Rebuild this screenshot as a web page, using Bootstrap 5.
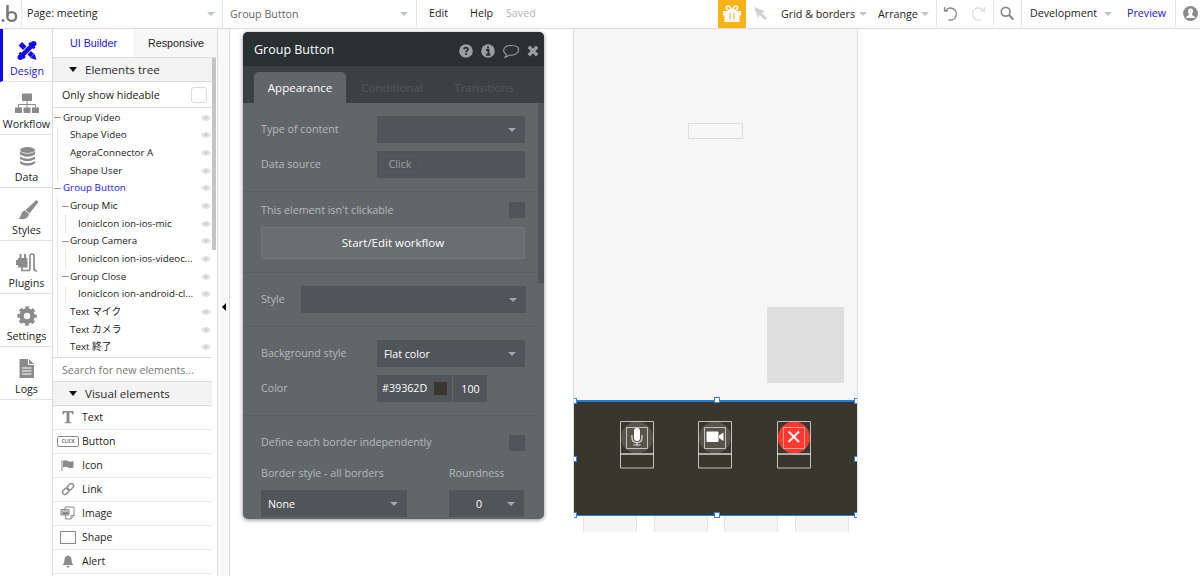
<!DOCTYPE html>
<html lang="en">
<head>
<meta charset="utf-8">
<title>Page: meeting</title>
<meta name="viewport" content="width=device-width, initial-scale=1">
<link href="https://cdn.jsdelivr.net/npm/bootstrap@5.3.0/dist/css/bootstrap.min.css" rel="stylesheet">
<style>
:root{--line:#e3e3e3;--ico:#8b8b8b;--blue:#1a12e8}
body{font-family:"Open Sans","Noto Sans CJK JP",sans-serif;font-size:10.7px;line-height:16px;color:#222;height:576px;overflow:hidden;background:#fff}
svg{display:block;flex:none}
.topbar{height:29px;border-bottom:1px solid #dcdcdc;padding-bottom:1px}
.topbar>*{flex:none;height:27px}
.sep{border-right:1px solid #e6e6e6}
.caret{width:0;height:0;border:4px solid transparent;border-top-color:#bcc5cb;border-bottom:0;flex:none;margin-top:1px}
.w-logo{width:22px}.w-page{width:201px;padding:0 7px 0 5px}.w-elem{width:194px;padding:0 8px 0 7px;color:#666}
.menu-edit{width:53px;padding-left:12px}.menu-help{width:36px}
.gift{width:28px;height:28px!important;background:#fbb216}
.rail{width:53px;border-right:1px solid #d9d9d9}
.rail-item{height:53px;border-bottom:1px solid #e3e3e3;font-size:10.7px;padding:10px 0 0 1px;color:#222}
.rail-item svg{height:24px;width:24px}
.rail-item.sel{color:var(--blue);border-left:3px solid #1508f0;padding-right:2px}
.side{width:165px;border-right:1px solid #dedede}
.side-body{width:159px}
.tabs-row{height:29px;font:10.7px "Liberation Sans",Arial,sans-serif;line-height:28px;border-bottom:1px solid #ddd}
.tab-ui{width:81px;color:var(--blue)}
.tab-resp{background:#f7f7f7;border-left:1px solid #efefef}
.sect{height:24px;background:#f3f3f3;border-bottom:1px solid #dcdcdc;font-size:11.6px;padding-left:15px;color:#2b2b2b}
.sect .caret{border-top-color:#111;margin:0 8px 0 1px;border-width:5px 4px 0}
.hideable{height:26px;border-bottom:1px solid #e2e2e2;padding:0 5px 0 9px}
.cb{width:16px;height:16px;border:1px solid #dadada;border-radius:3px}
.tree{height:250px;font-size:9.8px;border-bottom:1px solid #dcdcdc;padding-top:1px}
.tree-row{height:17.66px;padding-right:1px}
.tree-row svg{margin-left:auto}
.l0{padding-left:1px}.l1{padding-left:17px}.l1g{padding-left:9px}.l2{padding-left:25px}
.l0::before,.l1g::before{content:"";width:7px;height:1px;background:#9b9b9b;margin-right:2px;flex:none}
.l1g::before{margin-right:1px}
.l1,.l1g{background:linear-gradient(#e6e6e6,#e6e6e6) 4px 0/1px 100% no-repeat}
.l2{background:linear-gradient(#e6e6e6,#e6e6e6) 4px 0/1px 100% no-repeat,linear-gradient(#e6e6e6,#e6e6e6) 12px 0/1px 100% no-repeat}
.find{height:24px;border-bottom:1px solid #dcdcdc;padding-left:9px;color:#777}
.pal{height:24px;border-bottom:1px solid #e9e9e9;font-size:10.5px;padding-bottom:1px}
.pal span{width:29px}
.thumb{width:4px;height:192px;background:#c4c4c4;margin-top:29px}
.fold{width:12px;background:#f8f8f8;border-right:1px solid #dadada}
.stage{height:547px;overflow:hidden}
.device{left:343px;top:0;width:285px;height:486px;background:#f6f6f6;border:solid #dedede;border-width:0 1px}
.white-box{border:1px solid #dcdcdc;left:458px;top:94px;width:55px;height:16px}
.user-box{background:#dedede;left:537px;top:278px;width:77px;height:76px}
.group{left:344px;top:371px;width:283px;height:116px;background:#39362d;border:solid #1b7fdc;border-width:2px 0 1px}
.hd{width:6px;height:6px;background:#fff;border:1px solid #3c7de8}
.hd.edge{width:3px}.hd.el{border-left:0}.hd.er{border-right:0}
.tool{width:34px;top:19px}
.foot{left:353px;top:487px;width:266px;height:16px}
.foot div{width:54px;background:#f5f5f5;border:solid #e4e4e4;border-width:0 1px}
.dlg{left:13px;top:3px;width:301px;height:487px;border-radius:5px;background:#616669;color:#b5babc;box-shadow:0 1px 4px rgba(0,0,0,.45);overflow:hidden}
.dlg-head{height:34px;background:#283031;color:#fff;font-size:12.5px;padding:1px 5px 0 11px}
.dlg-tabs{height:37px;background:#3b4042;padding:6px 0 0 11px;font-size:11.5px;color:#55595b}
.dlg-tabs div{width:92px;height:31px}
.dlg-tabs .on{background:#616669;color:#fff;font-weight:500;border-radius:5px 5px 0 0}
.dlg-main{width:295px}
.blk{border-bottom:1px solid #595e61;padding:0 13px 0 18px}
.lb{margin-top:-2px}
.f{background:#50555a;height:27px;color:#fff;padding:0 9px 0 7px;font-weight:500}
.f .caret{border-top-color:#a3a8aa}
.f.wide{width:148px}
.chk{width:16px;height:16px;background:#50555a}
.click{border:1px dashed #5b6064;border-radius:3px;color:#9ea3a5;width:40px;height:17px;margin:-1px 0 0 -4px;font-weight:400}
.wf{height:32px;background:#696e71;border:1px solid #74797b;border-radius:2px;color:#fff;font-size:11.5px;font-weight:500}
.dthumb{width:6px;height:180px;background:#50555a}
</style>
</head>
<body>
<svg width="0" height="0" class="position-absolute"><defs>
<symbol id="eye" viewBox="0 0 10 8"><path d="M0 4Q5-2.500 10 4Q5 10.500 0 4Z" fill="#e0e0e0"/><circle cx="5" cy="3.800" r="2.200" fill="#cfcfcf" stroke="#f4f4f4" stroke-width=".6"/></symbol>
</defs></svg>

<header class="topbar d-flex align-items-center">
  <div class="w-logo sep d-flex align-items-center"><svg width="20" height="24" viewBox="0 0 20 24"><circle cx="3" cy="18.500" r="1.500" fill="#777"/><path d="M7.500 3V14" stroke="#777" stroke-width="2.500" fill="none"/><circle cx="11.700" cy="14.500" r="4.400" fill="none" stroke="#777" stroke-width="2.400"/></svg></div>
  <div class="w-page sep d-flex align-items-center justify-content-between"><span class="lb">Page: meeting</span><i class="caret"></i></div>
  <div class="w-elem sep d-flex align-items-center justify-content-between"><span>Group Button</span><i class="caret"></i></div>
  <div class="menu-edit d-flex align-items-center"><span class="lb">Edit</span></div>
  <div class="menu-help d-flex align-items-center"><span class="lb">Help</span></div>
  <div class="d-flex align-items-center" style="color:#b5b5b5"><span class="lb">Saved</span></div>
  <div class="gift ms-auto d-flex justify-content-center align-items-center"><svg width="20" height="18" viewBox="0 0 20 18"><path d="M1 6H19V10.500H1ZM2.500 10H17.500V17H2.500Z" fill="#fff"/><path d="M9.500 5.500C3 5.500 3.500 1 6 1S9 3.500 9.500 5.500ZM10.500 5.500C17 5.500 16.500 1 14 1S11 3.500 10.500 5.500Z" fill="none" stroke="#fff" stroke-width="1.700"/><path d="M8 7.500V15.500M12 7.500V15.500" stroke="#fbb216" stroke-width="1"/></svg></div>
  <div class="d-flex align-items-center ps-2" style="width:35px"><svg width="14" height="14" viewBox="0 0 14 14"><path d="M0 0L11 4L7.800 6L13 11L10.800 13L5.800 8L4 11Z" fill="#d2d2d2"/></svg></div>
  <div class="d-flex align-items-center" style="width:97px">Grid &amp; borders<i class="caret ms-auto" style="margin-right:11px"></i></div>
  <div class="d-flex align-items-center sep" style="width:59px">Arrange<i class="caret ms-auto" style="margin-right:7px"></i></div>
  <div class="d-flex align-items-center sep" style="width:57px;padding-left:6px;gap:13px"><svg width="15" height="16" viewBox="0 0 15 16"><path d="M2.500 4.500A6 6 0 1 1 5.500 13.800" fill="none" stroke="#8a8a8a" stroke-width="1.500"/><path d="M1.500 1V5H5" fill="none" stroke="#8a8a8a" stroke-width="1.300"/></svg><svg width="15" height="16" viewBox="0 0 15 16"><path d="M12.500 4.500A6 6 0 1 0 9.500 13.800" fill="none" stroke="#dedede" stroke-width="1.500"/><path d="M13.500 1V5H10" fill="none" stroke="#dedede" stroke-width="1.300"/></svg></div>
  <div class="d-flex align-items-center justify-content-center sep" style="width:28px"><svg width="15" height="15" viewBox="0 0 15 15"><circle cx="5.700" cy="5.700" r="4.400" fill="none" stroke="#8a8a8a" stroke-width="1.700"/><path d="M9 9L13.500 13.500" stroke="#8a8a8a" stroke-width="2.200"/></svg></div>
  <div class="d-flex align-items-center" style="width:105px;padding-left:8px"><span class="lb">Development</span><i class="caret" style="margin-left:7px"></i></div>
  <div class="d-flex align-items-center sep" style="width:49px;color:var(--blue)"><span class="lb">Preview</span></div>
  <div class="d-flex align-items-center justify-content-end" style="width:24px;padding-right:2px"><svg width="15" height="15" viewBox="0 0 15 15"><circle cx="7.500" cy="7.500" r="7.400" fill="#8a8a8a"/><path d="M7.500 2.500C9.500 2.500 10.300 4 10 5.500S9 8 9 8.700S12 10 12 12H3C3 10 6 9.400 6 8.700S5.200 7 5 5.500S5.500 2.500 7.500 2.500Z" fill="#fff"/></svg></div>
</header>

<div class="d-flex" style="height:547px">
  <nav class="rail flex-shrink-0">
    <div class="rail-item sel d-flex flex-column align-items-center"><svg viewBox="0 0 24 24" style="margin-top:-1px;margin-bottom:1px"><g transform="translate(12 12.500) scale(.95) translate(-12 -12)"><path d="M5 5L17.500 17.500" stroke="#1508f0" stroke-width="5.200"/><path d="M15.500 20L20 15.500L22 22Z" fill="#1508f0"/><path d="M18.500 5.500L5.500 18.500" stroke="#fff" stroke-width="6.600"/><path d="M18 6L6 18" stroke="#1508f0" stroke-width="4.800"/><path d="M14.300 4L20 9.700M4 14.300L9.700 20" stroke="#1508f0" stroke-width="3"/><circle cx="19" cy="5" r="2.900" fill="#1508f0"/><circle cx="5" cy="19" r="2.900" fill="#1508f0"/></g></svg>Design</div>
    <div class="rail-item d-flex flex-column align-items-center"><svg viewBox="0 0 24 24" fill="#8b8b8b"><path d="M7 1.500H17V9H7ZM0 15.500H7V21H0ZM8.500 15.500H15.500V21H8.500ZM17 15.500H24V21H17Z"/><path d="M12 9V16M3.500 16V12.500H20.500V16" stroke="#8b8b8b" fill="none"/></svg>Workflow</div>
    <div class="rail-item d-flex flex-column align-items-center"><svg viewBox="0 0 24 24" fill="#8b8b8b"><ellipse cx="12.500" cy="5" rx="7.500" ry="3"/><path d="M5 6.500Q12.500 11 20 6.500V9.500Q12.500 14 5 9.500ZM5 11.500Q12.500 16 20 11.500V14Q12.500 18.500 5 14ZM5 16Q12.500 20.500 20 16V18.500Q12.500 23 5 18.500Z"/></svg>Data</div>
    <div class="rail-item d-flex flex-column align-items-center"><svg viewBox="0 0 24 24" fill="#8b8b8b"><path d="M21.500 2L23.500 4L14.500 15.500L10.500 12Z"/><path d="M10 12.500L14 16C13 20.500 8 22.500 3.500 20.500C6.500 19 5.500 13 10 12.500Z"/></svg>Styles</div>
    <div class="rail-item d-flex flex-column align-items-center"><svg viewBox="0 0 24 24" fill="#8b8b8b"><path d="M3 7H12.500V16.500H3ZM4.500 3H6.500V8H4.500ZM9 3H11V8H9ZM1 9H4V14H1Z"/><path d="M8 15V19.500H14.500Q16 19.500 16 17V5Q16 3 18 3T20 5V17Q20 20 23 20" fill="none" stroke="#8b8b8b" stroke-width="1.700" transform="translate(-1 0)"/></svg>Plugins</div>
    <div class="rail-item d-flex flex-column align-items-center"><svg viewBox="0 0 24 24"><circle cx="12" cy="12" r="5.500" fill="none" stroke="#8b8b8b" stroke-width="4.600"/><circle cx="12" cy="12" r="8.300" fill="none" stroke="#8b8b8b" stroke-width="2.800" stroke-dasharray="3.600 2.919" stroke-dashoffset="1.800"/></svg>Settings</div>
    <div class="rail-item d-flex flex-column align-items-center"><svg viewBox="0 0 24 24"><path d="M4.500 2H14L19 7V21H4.500Z" fill="#8b8b8b"/><path d="M13.500 2V7.500H19M7 11H16.500M7 14H16.500M7 17H16.500" stroke="#fff" fill="none"/></svg>Logs</div>
  </nav>

  <aside class="side flex-shrink-0 d-flex">
    <div class="side-body flex-shrink-0">
      <div class="tabs-row d-flex text-center" style="width:164px"><div class="tab-ui">UI Builder</div><div class="tab-resp flex-fill">Responsive</div></div>
      <div class="sect d-flex align-items-center"><i class="caret"></i>Elements tree</div>
      <div class="hideable d-flex align-items-center justify-content-between">Only show hideable<i class="cb"></i></div>
      <div class="tree">
        <div class="tree-row l0 d-flex align-items-center">Group Video<svg width="10" height="8"><use href="#eye"/></svg></div>
        <div class="tree-row l1 d-flex align-items-center">Shape Video<svg width="10" height="8"><use href="#eye"/></svg></div>
        <div class="tree-row l1 d-flex align-items-center">AgoraConnector A<svg width="10" height="8"><use href="#eye"/></svg></div>
        <div class="tree-row l1 d-flex align-items-center">Shape User<svg width="10" height="8"><use href="#eye"/></svg></div>
        <div class="tree-row l0 d-flex align-items-center" style="color:var(--blue)">Group Button<svg width="10" height="8"><use href="#eye"/></svg></div>
        <div class="tree-row l1g d-flex align-items-center">Group Mic<svg width="10" height="8"><use href="#eye"/></svg></div>
        <div class="tree-row l2 d-flex align-items-center">IonicIcon ion-ios-mic<svg width="10" height="8"><use href="#eye"/></svg></div>
        <div class="tree-row l1g d-flex align-items-center">Group Camera<svg width="10" height="8"><use href="#eye"/></svg></div>
        <div class="tree-row l2 d-flex align-items-center">IonicIcon ion-ios-videoc...<svg width="10" height="8"><use href="#eye"/></svg></div>
        <div class="tree-row l1g d-flex align-items-center">Group Close<svg width="10" height="8"><use href="#eye"/></svg></div>
        <div class="tree-row l2 d-flex align-items-center">IonicIcon ion-android-cl...<svg width="10" height="8"><use href="#eye"/></svg></div>
        <div class="tree-row l1 d-flex align-items-center">Text マイク<svg width="10" height="8"><use href="#eye"/></svg></div>
        <div class="tree-row l1 d-flex align-items-center">Text カメラ<svg width="10" height="8"><use href="#eye"/></svg></div>
        <div class="tree-row l1 d-flex align-items-center">Text 終了<svg width="10" height="8"><use href="#eye"/></svg></div>
      </div>
      <div class="find d-flex align-items-center">Search for new elements...</div>
      <div class="sect d-flex align-items-center"><i class="caret"></i>Visual elements</div>
      <div class="pal d-flex align-items-center"><span class="d-flex justify-content-center"><svg width="12" height="14" viewBox="0 0 12 14"><path d="M.5 1H11.500V4.500H10.500Q10.200 2.300 7.500 2.300V11.500Q7.500 12.500 9.500 12.500V13.200H2.500V12.500Q4.500 12.500 4.500 11.500V2.300Q1.800 2.300 1.500 4.500H.5Z" fill="#8b8b8b"/></svg></span>Text</div>
      <div class="pal d-flex align-items-center"><span class="d-flex justify-content-center"><svg width="22" height="11" viewBox="0 0 22 11"><rect x=".5" y=".5" width="21" height="10" rx="1.500" fill="#fff" stroke="#8b8b8b"/><text x="11" y="7.300" font-size="4.600" font-weight="700" text-anchor="middle" fill="#777">CLICK</text></svg></span>Button</div>
      <div class="pal d-flex align-items-center"><span class="d-flex justify-content-center"><svg width="13" height="12" viewBox="0 0 13 12"><path d="M1 1V12" stroke="#8b8b8b"/><path d="M2 2Q4.500.5 7 2T12.500 2V8.500Q9.500 10 7 8.500T2 8.500Z" fill="#8b8b8b"/></svg></span>Icon</div>
      <div class="pal d-flex align-items-center"><span class="d-flex justify-content-center"><svg width="14" height="14" viewBox="0 0 14 14" fill="none" stroke="#8b8b8b" stroke-width="1.400"><rect x="-3.600" y="-2.300" width="7.200" height="4.600" rx="2.300" transform="translate(9.300 4.900) rotate(-45)"/><rect x="-3.600" y="-2.300" width="7.200" height="4.600" rx="2.300" transform="translate(4.800 9.300) rotate(-45)"/></svg></span>Link</div>
      <div class="pal d-flex align-items-center"><span class="d-flex justify-content-center"><svg width="15" height="14" viewBox="0 0 15 14"><path d="M5 3V1H14V9.500L11 13H5.500V9" fill="none" stroke="#8b8b8b"/><path d="M14 9.500H11V13" fill="none" stroke="#8b8b8b"/><path d="M1 3.500H9V9H1Z" fill="#c4c4c4" stroke="#8b8b8b"/><path d="M2 8L4 5.500L5.500 7L7 5.500L8.500 8Z" fill="#777"/></svg></span>Image</div>
      <div class="pal d-flex align-items-center"><span class="d-flex justify-content-center"><svg width="16" height="13" viewBox="0 0 16 13"><rect x=".5" y=".5" width="15" height="12" fill="#fff" stroke="#8b8b8b"/></svg></span>Shape</div>
      <div class="pal d-flex align-items-center"><span class="d-flex justify-content-center"><svg width="12" height="13" viewBox="0 0 12 13"><path d="M6 .5Q9.500 1.200 9.500 5Q9.500 8.500 11.500 10H.5Q2.500 8.500 2.500 5Q2.500 1.200 6 .5ZM4.500 11H7.500Q7.300 12.700 6 12.700T4.500 11Z" fill="#8b8b8b"/></svg></span>Alert</div>
    </div>
    <div class="thumb"></div>
  </aside>
  <div class="fold flex-shrink-0 d-flex align-items-center justify-content-center"><svg width="4" height="8" viewBox="0 0 4 8" style="margin-top:8px"><path d="M4 0V8L0 4Z" fill="#000"/></svg></div>

  <main class="stage position-relative flex-fill">
    <div class="device position-absolute"></div>
    <div class="white-box position-absolute"></div>
    <div class="user-box position-absolute"></div>
    <div class="foot position-absolute d-flex justify-content-between"><div></div><div></div><div></div><div></div></div>
    <div class="group position-absolute">
      <svg class="tool position-absolute" style="left:46px" height="49" viewBox="0 0 34 49"><circle cx="17" cy="16.500" r="16" fill="#57544c"/><g fill="none" stroke="#c2c1be"><path d="M.5.500H33.500V47H.5Z"/><path d="M6.500 6.500H27.500V27.500H6.500Z"/></g><path d="M0 33H34" stroke="#d5d4d2" stroke-width="1.600"/><rect x="14" y="7" width="6" height="13" rx="3" fill="#fff"/><path d="M12 14V17Q12 21.500 17 21.500T22 17V14M17 21.500V24M13.500 24H20.500" fill="none" stroke="#e6e4df" stroke-width="1.200"/></svg>
      <svg class="tool position-absolute" style="left:124px" height="49" viewBox="0 0 34 49"><circle cx="17" cy="16.500" r="16" fill="#57544c"/><g fill="none" stroke="#c2c1be"><path d="M.5.500H33.500V47H.5Z"/><path d="M6.500 6.500H27.500V27.500H6.500Z"/></g><path d="M0 33H34" stroke="#d5d4d2" stroke-width="1.600"/><rect x="8.500" y="10.500" width="12" height="10.500" rx="1" fill="#fff"/><path d="M21 14.500L25.500 11.500V20L21 17Z" fill="#fff"/></svg>
      <svg class="tool position-absolute" style="left:203px" height="49" viewBox="0 0 34 49"><circle cx="17" cy="16.500" r="16" fill="#ff3830"/><g fill="none" stroke="#c2c1be"><path d="M.5.500H33.500V47H.5Z"/><path d="M6.500 6.500H27.500V27.500H6.500Z" stroke="#ffa09b"/></g><path d="M0 33H34" stroke="#d5d4d2" stroke-width="1.600"/><path d="M11.500 10.500L22 21M22 10.500L11.500 21" stroke="#fff" stroke-width="2"/></svg>
    </div>
    <div class="hd edge el position-absolute" style="left:344px;top:369px"></div>
    <div class="hd position-absolute" style="left:484px;top:368px"></div>
    <div class="hd edge er position-absolute" style="left:624px;top:369px"></div>
    <div class="hd edge el position-absolute" style="left:344px;top:427px"></div>
    <div class="hd edge er position-absolute" style="left:624px;top:427px"></div>
    <div class="hd edge el position-absolute" style="left:344px;top:483px"></div>
    <div class="hd position-absolute" style="left:484px;top:483px"></div>
    <div class="hd edge er position-absolute" style="left:624px;top:483px"></div>

    <section class="dlg position-absolute">
      <div class="dlg-head d-flex align-items-center">Group Button
        <div class="d-flex align-items-center ms-auto" style="gap:8px;padding-top:2px">
          <svg width="14" height="14" viewBox="0 0 14 14"><circle cx="7" cy="7" r="6.800" fill="#9a9fa0"/><path d="M4.900 5.300Q5.100 3.600 7 3.600T9 5.300Q9 6.200 8 6.700T7.100 8.300M7.100 9.300V11" fill="none" stroke="#283031" stroke-width="1.800"/></svg>
          <svg width="14" height="14" viewBox="0 0 14 14"><circle cx="7" cy="7" r="6.800" fill="#9a9fa0"/><path d="M7 2.500V4.500M5 6H7.500V10.500M5 10.700H9.500" fill="none" stroke="#283031" stroke-width="1.900"/></svg>
          <svg width="16" height="14" viewBox="0 0 16 14"><path d="M5.500 11.200Q4.500 13 2 13.200Q3.500 11.800 3.300 10.400C-1.500 7.500.5 1.500 8 1.500S15.500 4.300 15.500 6.400S12 12 5.500 11.200Z" fill="none" stroke="#9a9fa0" stroke-width="1.100"/></svg>
          <svg width="12" height="12" viewBox="0 0 12 12"><path d="M1.800 1.800L10.200 10.200M10.200 1.800L1.800 10.200" stroke="#9a9fa0" stroke-width="3.400"/></svg>
        </div>
      </div>
      <div class="dlg-tabs d-flex text-center"><div class="on d-flex align-items-center justify-content-center">Appearance</div><div class="d-flex align-items-center justify-content-center">Conditional</div><div class="d-flex align-items-center justify-content-center">Transitions</div></div>
      <div class="d-flex justify-content-between">
        <div class="dlg-main flex-shrink-0">
          <div class="blk" style="height:89px;padding-top:13px">
            <div class="d-flex align-items-center justify-content-between"><span class="lb">Type of content</span><div class="f wide d-flex align-items-center justify-content-end"><i class="caret"></i></div></div>
            <div class="d-flex align-items-center justify-content-between" style="margin-top:8px"><span class="lb">Data source</span><div class="f wide d-flex align-items-center"><div class="click d-flex align-items-center justify-content-center">Click</div></div></div>
          </div>
          <div class="blk" style="height:81px;padding-top:10px">
            <div class="d-flex align-items-center justify-content-between">This element isn't clickable<i class="chk"></i></div>
            <div class="wf d-flex align-items-center justify-content-center" style="margin-top:9px">Start/Edit workflow</div>
          </div>
          <div class="blk" style="height:54px;padding-top:13px">
            <div class="d-flex align-items-center justify-content-between" style="margin-right:-1px"><span class="lb">Style</span><div class="f d-flex align-items-center justify-content-end" style="width:225px"><i class="caret"></i></div></div>
          </div>
          <div class="blk" style="height:89px;padding-top:13px">
            <div class="d-flex align-items-center justify-content-between"><span class="lb">Background style</span><div class="f wide d-flex align-items-center justify-content-between">Flat color<i class="caret"></i></div></div>
            <div class="d-flex align-items-center" style="margin-top:8px"><span class="lb" style="width:116px">Color</span><div class="f d-flex align-items-center" style="width:75px;padding:0 5px 0 5px"><span class="lb">#39362D</span><i style="width:13px;height:13px;background:#39362d;margin-left:auto"></i></div><div class="f d-flex align-items-center justify-content-center" style="width:34px;margin-left:1px;padding:0 0 0 1px">100</div></div>
          </div>
          <div class="blk border-0" style="padding-top:19px">
            <div class="d-flex align-items-center justify-content-between"><span class="lb">Define each border independently</span><i class="chk"></i></div>
            <div class="d-flex" style="margin-top:14px"><span style="width:188px">Border style - all borders</span><span>Roundness</span></div>
            <div class="d-flex justify-content-between" style="margin-top:9px"><div class="f d-flex align-items-center justify-content-between" style="width:146px">None<i class="caret"></i></div><div class="f d-flex align-items-center justify-content-end" style="width:75px;gap:25px;margin-right:1px">0<i class="caret"></i></div></div>
          </div>
        </div>
        <div class="dthumb"></div>
      </div>
    </section>
  </main>
</div>
<script src="https://cdn.jsdelivr.net/npm/bootstrap@5.3.0/dist/js/bootstrap.bundle.min.js"></script>
</body>
</html>
